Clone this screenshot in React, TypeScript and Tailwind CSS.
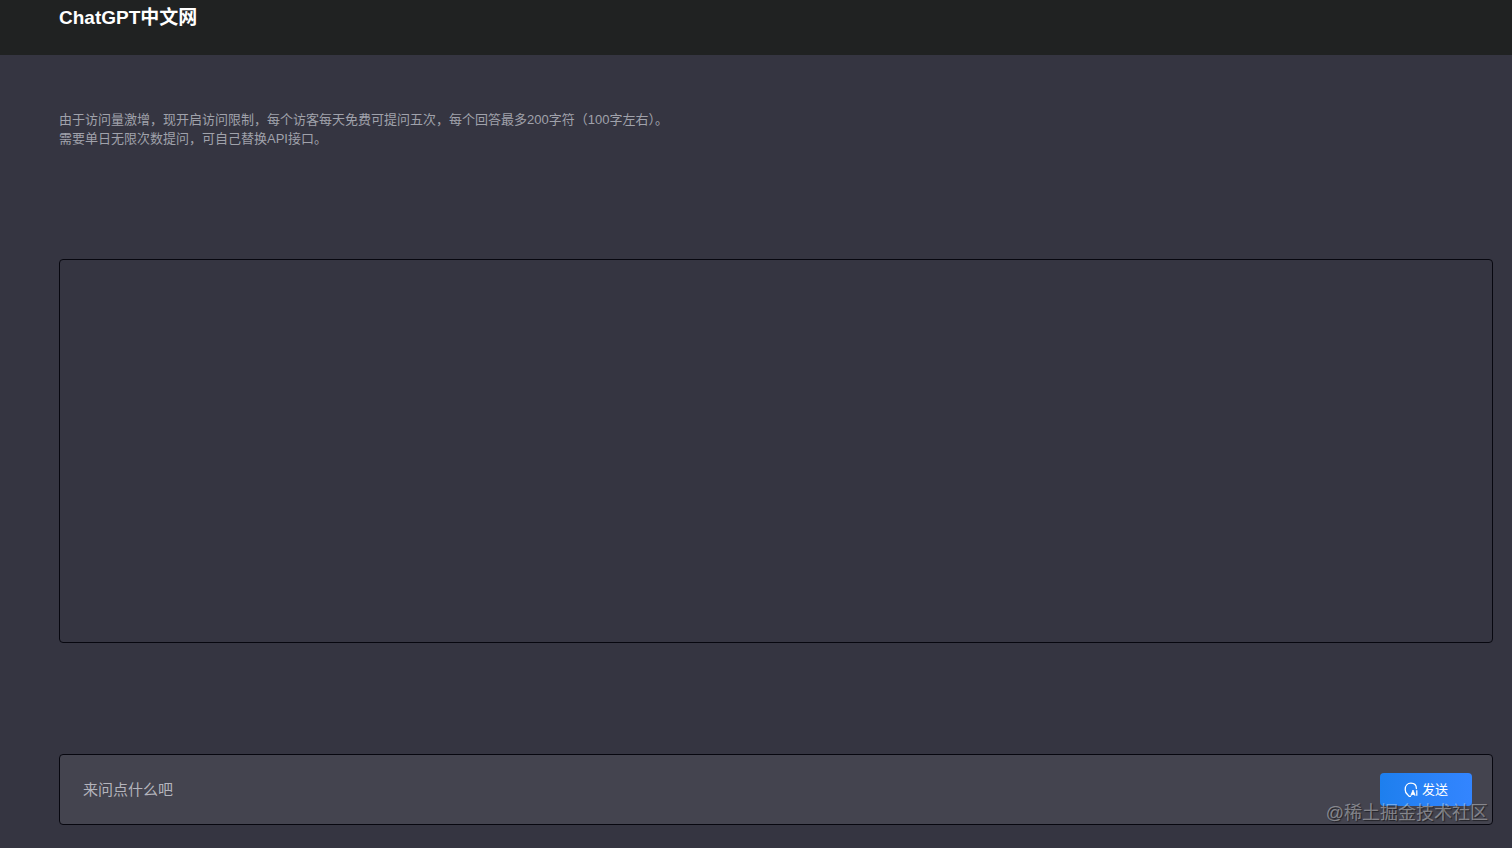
import { useState } from "react"

function AskIcon() {
  return (
    <svg width="14" height="16" viewBox="0 0 14 16" fill="none" stroke="currentColor" aria-hidden="true">
      <path
        d="M6.4 14.4H5.2L3.6 12.6C2 11.5 1.2 9.6 1.2 7.4C1.2 3.7 3.6 1.2 6.9 1.2C10.2 1.2 12.4 3.4 12.4 6.6"
        strokeWidth="1.3"
        strokeLinecap="round"
        strokeLinejoin="round"
      />
      <path d="M6.8 13.4L9 8L11.2 13.4L9 12.2Z" fill="currentColor" strokeWidth="0.8" strokeLinejoin="round" />
      <path d="M12.8 8.2V13.8" strokeWidth="1.2" />
    </svg>
  )
}

export default function App() {
  const [question, setQuestion] = useState("")

  return (
    <div className="min-h-screen flex flex-col bg-[#353541] font-['Liberation_Sans','Noto_Sans_CJK_SC',sans-serif]">
      <header className="h-[55px] shrink-0 bg-[#202222] pl-[59px] pr-[19px] pt-1">
        <h1 className="text-[19px] leading-7 font-bold text-white">ChatGPT中文网</h1>
      </header>

      <main className="flex-1 flex flex-col pl-[59px] pr-[19px] pt-[55px] pb-[23px]">
        <div className="text-[13px] leading-[19px] text-[#a0a2ab]">
          <p>由于访问量激增，现开启访问限制，每个访客每天免费可提问五次，每个回答最多200字符（100字左右）。</p>
          <p>需要单日无限次数提问，可自己替换API接口。</p>
        </div>

        <section aria-live="polite" className="flex-1 mt-[111px] rounded border border-[#07070f]" />

        <form
          onSubmit={e => e.preventDefault()}
          className="relative mt-[111px] h-[71px] flex items-center rounded border border-[#07070f] bg-[#44444f] pl-[23px] pr-5"
        >
          <input
            type="text"
            aria-label="来问点什么吧"
            placeholder="来问点什么吧"
            value={question}
            onChange={e => setQuestion(e.target.value)}
            className="flex-1 min-w-0 h-8 bg-transparent text-[15px] text-white placeholder:text-[#b4b4bc] outline-none"
          />
          <button
            type="submit"
            className="w-[92px] h-[33px] flex items-center justify-center gap-1 rounded bg-linear-to-r from-[#1d7fee] to-[#3385ff] text-[13px] text-white cursor-pointer"
          >
            <AskIcon />
            发送
          </button>
          <span className="absolute right-1 bottom-0 text-[18px] leading-[22px] text-white/40 [text-shadow:1px_1px_1px_rgba(0,0,0,0.5)] pointer-events-none">
            @稀土掘金技术社区
          </span>
        </form>
      </main>
    </div>
  )
}
